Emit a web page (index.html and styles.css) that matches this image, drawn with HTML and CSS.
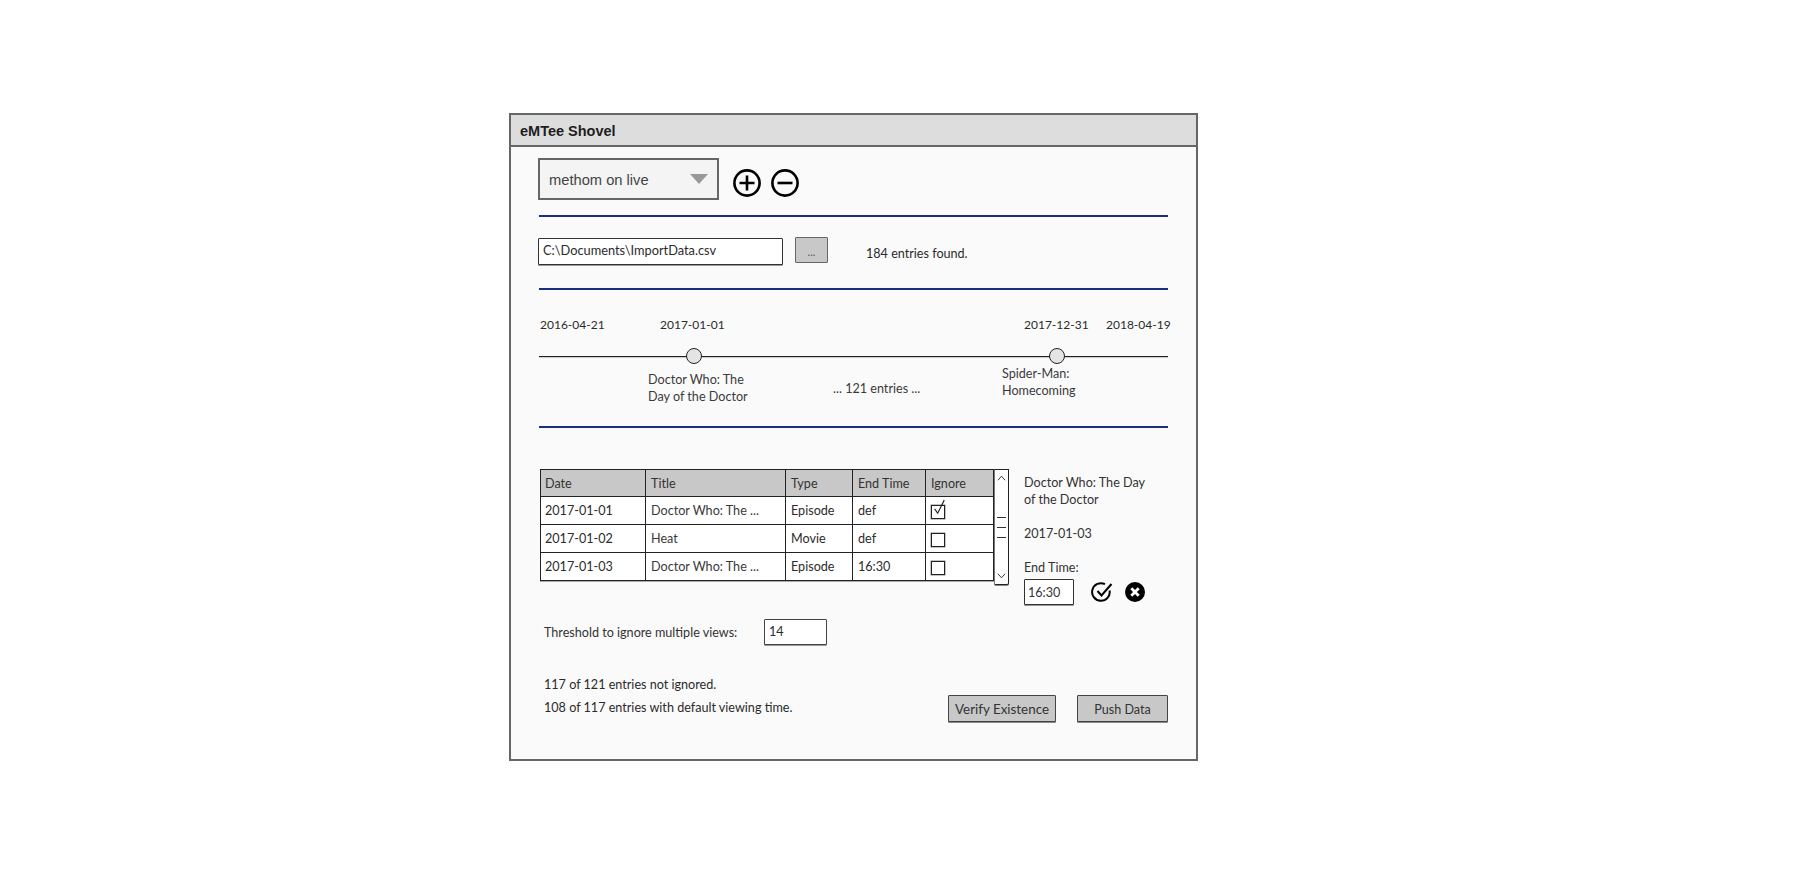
FILE: index.html
```html
<!DOCTYPE html>
<html lang="en">
<head>
<meta charset="utf-8">
<title>eMTee Shovel</title>
<link rel="stylesheet" href="styles.css">
</head>
<body>
<div class="window">
  <div class="titlebar">eMTee Shovel</div>
  <div class="content">
    <div class="server-row">
      <div class="dropdown"><span>methom on live</span><i class="arrow"></i></div>
      <svg class="round-icon" viewBox="0 0 30 30"><circle cx="15" cy="15" r="12.6"/><path d="M15 7.5v15M7.5 15h15"/></svg>
      <svg class="round-icon" viewBox="0 0 30 30"><circle cx="15" cy="15" r="12.6"/><path d="M7.5 15h15"/></svg>
    </div>
    <hr class="rule rule-first">
    <div class="file-row">
      <div class="field file-field">C:\Documents\ImportData.csv</div>
      <div class="browse">...</div>
      <div class="found">184 entries found.</div>
    </div>
    <hr class="rule rule-second">
    <div class="timeline">
      <span class="pin date-a">2016-04-21</span>
      <span class="pin date-b">2017-01-01</span>
      <span class="pin date-c">2017-12-31</span>
      <span class="pin date-d">2018-04-19</span>
      <div class="track"></div>
      <i class="knob knob-a"></i>
      <i class="knob knob-b"></i>
      <span class="pin note note-a">Doctor Who: The<br>Day of the Doctor</span>
      <span class="pin note note-b">... 121 entries ...</span>
      <span class="pin note note-c">Spider-Man:<br>Homecoming</span>
    </div>
    <hr class="rule">
    <div class="table-row">
      <table class="entries">
        <colgroup><col class="c1"><col class="c2"><col class="c3"><col class="c4"><col class="c5"></colgroup>
        <thead><tr><th>Date</th><th>Title</th><th>Type</th><th>End Time</th><th>Ignore</th></tr></thead>
        <tbody>
          <tr><td>2017-01-01</td><td class="muted">Doctor Who: The ...</td><td>Episode</td><td>def</td><td><div class="box"><svg class="tick" viewBox="0 0 16 20"><path d="M3 11l3.5 5L14 1"/></svg></div></td></tr>
          <tr><td>2017-01-02</td><td class="muted">Heat</td><td>Movie</td><td>def</td><td><div class="box"></div></td></tr>
          <tr><td>2017-01-03</td><td class="muted">Doctor Who: The ...</td><td>Episode</td><td>16:30</td><td><div class="box"></div></td></tr>
        </tbody>
      </table>
      <div class="scrollbar">
        <svg class="chev" viewBox="0 0 10 6"><path d="M1 5.5L5 1l4 4.5"/></svg>
        <div class="grip"><i></i><i></i><i></i></div>
        <svg class="chev" viewBox="0 0 10 6"><path d="M1 .5L5 5l4-4.5"/></svg>
      </div>
      <div class="details">
        <div class="detail-title">Doctor Who: The Day<br>of the Doctor</div>
        <div class="detail-date">2017-01-03</div>
        <div class="detail-label">End Time:</div>
        <div class="detail-edit">
          <div class="field time-field">16:30</div>
          <svg class="action action-ok" viewBox="0 0 22 22"><path d="M18.6 9.5A8.8 8.8 0 1 1 14 3.2"/><path d="M6.5 10l4 4.5L20.5 3"/></svg>
          <svg class="action" viewBox="0 0 20 20"><circle class="disc" cx="10" cy="10" r="10"/><path class="cross" d="M6.3 6.3l7.4 7.4M13.7 6.3l-7.4 7.4"/></svg>
        </div>
      </div>
    </div>
    <div class="threshold-row">
      <span class="threshold-label">Threshold to ignore multiple views:</span>
      <div class="field threshold-field">14</div>
    </div>
    <div class="footer-row">
      <div class="stats">
        <div>117 of 121 entries not ignored.</div>
        <div>108 of 117 entries with default viewing time.</div>
      </div>
      <div class="button verify">Verify Existence</div>
      <div class="button push">Push Data</div>
    </div>
  </div>
</div>
</body>
</html>
```

FILE: styles.css
```css
* { box-sizing: border-box; }
html, body { margin: 0; background: #fff; }
body { font-family: "Lato", "Liberation Sans", sans-serif; font-size: 12.6px; color: #2b2b2b; height: 885px; overflow: hidden; }

.window { width: 689px; height: 648px; margin: 113px 0 0 509px; border: 2px solid #666; background: #fafafa; }
.titlebar { height: 32px; padding-left: 9px; background: #ddd; border-bottom: 2px solid #666; font: bold 14.5px/32px "Liberation Sans", sans-serif; color: #1d1d1d; }
.content { padding: 11px 28px 0 27px; }

.server-row { display: flex; align-items: flex-start; height: 41px; }
.dropdown { width: 181px; height: 42px; display: flex; align-items: center; justify-content: space-between; padding: 2px 9px 0 9px; background: #f4f4f4; border: 2px solid #666; font: 14.7px "Liberation Sans", sans-serif; color: #444; }
.arrow { width: 0; height: 0; border-left: 9.5px solid transparent; border-right: 9.5px solid transparent; border-top: 10px solid #999; margin-top: -3px; }
.round-icon { width: 30px; height: 30px; fill: none; stroke: #000; stroke-width: 2.6; margin: 10px 0 0 13px; }
.round-icon + .round-icon { margin-left: 8px; }

.rule { height: 2px; margin: 0; border: 0; background: #1a2f80; width: 629px; margin-left: 1px; }
.rule-first { margin-top: 16px; }

.file-row { display: flex; align-items: flex-start; margin-top: 21px; height: 50px; }
.rule-second { margin-top: 0; }
.field { background: #fff; border: 1px solid #333; border-radius: 1px; box-shadow: 0 1px 0 #999; }
.file-field { width: 245px; height: 27px; padding-left: 4px; line-height: 23px; font-size: 12.8px; }
.browse { width: 33px; height: 26px; margin: -1px 0 0 12px; background: #c8c8c8; border: 1px solid #666; border-radius: 1px; text-align: center; font-size: 11px; line-height: 28px; color: #555; }
.found { margin: 6px 0 0 38px; line-height: 20px; }

.timeline { position: relative; height: 136px; }
.pin { position: absolute; white-space: nowrap; line-height: 17px; }
.date-a, .date-b, .date-c, .date-d { font-size: 12px; top: 26px; }
.date-a { left: 2px; }
.date-b { left: 122px; }
.date-c { left: 486px; }
.date-d { left: 568px; }
.track { position: absolute; left: 1px; top: 66px; width: 629px; height: 1px; background: #222; box-shadow: 0 1px 0 #ccc; }
.knob { position: absolute; top: 58px; width: 16px; height: 16px; border-radius: 50%; background: #e4e4e4; border: 1px solid #222; }
.knob-a { left: 148px; }
.knob-b { left: 511px; }
.note { color: #3a3a3a; }
.note-a { left: 110px; top: 81px; }
.note-b { left: 295px; top: 90px; }
.note-c { left: 464px; top: 75px; }

.table-row { display: flex; align-items: flex-start; margin: 41px 0 0 2px; height: 135px; }
.entries { width: 453px; table-layout: fixed; border-collapse: collapse; border: 1px solid #222; background: #fff; box-shadow: 0 1px 0 #aaa; }
.c1 { width: 105px; }
.c2 { width: 140px; }
.c3 { width: 67px; }
.c4 { width: 73px; }
.c5 { width: 68px; }
.entries th, .entries td { height: 28px; padding: 0 0 0 5px; border: 1px solid #222; font-weight: 400; text-align: left; white-space: nowrap; overflow: hidden; }
.entries th:first-child, .entries td:first-child { padding-left: 4px; }
.entries th { height: 27px; background: #c8c8c8; color: #333; border-bottom-color: #222; }
.muted { color: #3a3a3a; }
.box { position: relative; top: 1px; width: 14px; height: 14px; border: 1px solid #222; box-shadow: 0 0 0 .5px #888; background: #fff; }
.tick { position: absolute; left: 0; top: -7px; width: 14px; height: 18px; fill: none; stroke: #222; stroke-width: 1.3; }

.scrollbar { width: 15px; height: 116px; display: flex; flex-direction: column; justify-content: space-between; align-items: center; padding: 5px 0; background: #fff; border: 1px solid #222; border-left-color: #777; border-radius: 0 0 2px 2px; box-shadow: 0 1px 0 #888; }
.chev { width: 9px; height: 6px; fill: none; stroke: #222; stroke-width: 1; }
.grip { display: flex; flex-direction: column; gap: 9px; }
.grip i { display: block; width: 9px; height: 1px; background: #333; }

.details { margin: 5px 0 0 15px; color: #333; line-height: 17px; }
.detail-date { margin-top: 17px; }
.detail-label { margin-top: 17px; }
.detail-edit { display: flex; align-items: center; margin-top: 3px; }
.time-field { width: 50px; height: 26px; padding-left: 3px; line-height: 25px; }
.action { width: 20px; height: 20px; margin-left: 12px; }
.action-ok { width: 22px; height: 22px; margin-left: 17px; fill: none; stroke: #000; stroke-width: 2; }
.disc { fill: #000; }
.cross { fill: none; stroke: #fff; stroke-width: 2.8; }

.threshold-row { display: flex; align-items: center; height: 26px; margin: 15px 0 0 6px; }
.threshold-label { width: 220px; color: #333; }
.threshold-field { width: 63px; height: 26px; padding-left: 4px; line-height: 24px; border-color: #444; }

.footer-row { display: flex; align-items: flex-end; height: 50px; margin-top: 27px; }
.stats { width: 410px; padding-left: 6px; line-height: 23px; margin-bottom: 3px; }
.button { height: 27px; background: #c8c8c8; border: 1px solid #444; border-radius: 1px; text-align: center; line-height: 27px; color: #333; box-shadow: 0 1px 0 #888; }
.verify { width: 108px; font-size: 13.4px; }
.push { width: 91px; margin-left: 21px; }
```
